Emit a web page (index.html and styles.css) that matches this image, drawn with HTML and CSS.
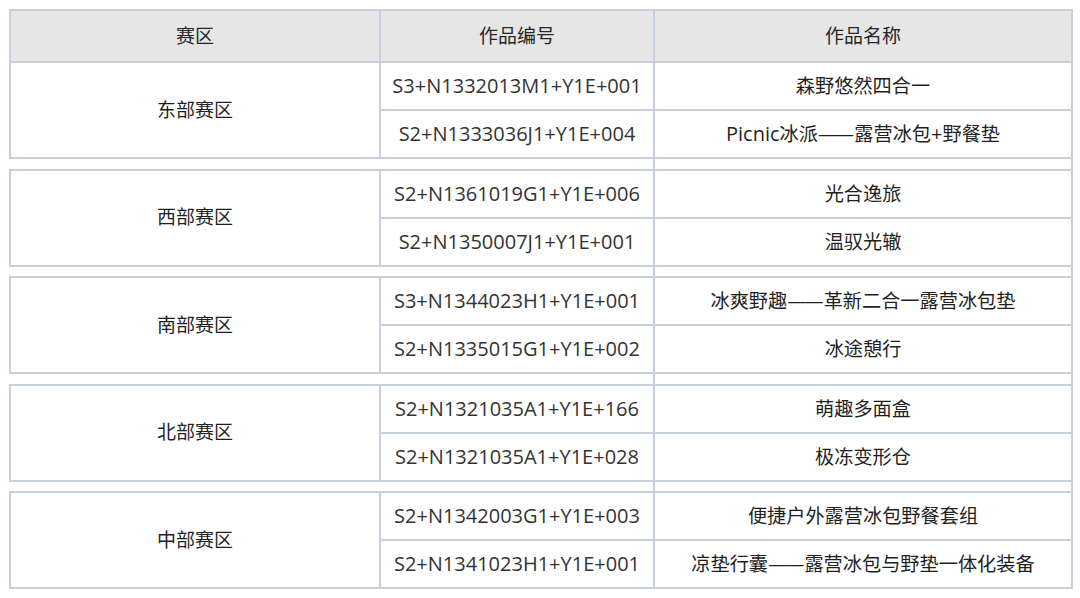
FILE: index.html
```html
<!DOCTYPE html>
<html lang="zh-CN">
<head>
<meta charset="utf-8">
<title>作品列表</title>
<link rel="stylesheet" href="styles.css">
</head>
<body>
<table class="works">
  <colgroup>
    <col class="c-region">
    <col class="c-code">
    <col class="c-name">
  </colgroup>
  <thead>
    <tr class="head-row">
      <th>赛区</th>
      <th>作品编号</th>
      <th>作品名称</th>
    </tr>
  </thead>
  <tbody>
    <tr class="data-row">
      <td class="region" rowspan="2">东部赛区</td>
      <td class="code">S3+N1332013M1+Y1E+001</td>
      <td class="name">森野悠然四合一</td>
    </tr>
    <tr class="data-row">
      <td class="code">S2+N1333036J1+Y1E+004</td>
      <td class="name"><span class="latin">Picnic</span>冰派<span class="dash">——</span>露营冰包<span class="latin">+</span>野餐垫</td>
    </tr>
    <tr class="gap-row"><td class="gap-l" colspan="2"></td><td class="gap-r"></td></tr>

    <tr class="data-row">
      <td class="region" rowspan="2">西部赛区</td>
      <td class="code">S2+N1361019G1+Y1E+006</td>
      <td class="name">光合逸旅</td>
    </tr>
    <tr class="data-row">
      <td class="code">S2+N1350007J1+Y1E+001</td>
      <td class="name">温驭光辙</td>
    </tr>
    <tr class="gap-row"><td class="gap-l" colspan="2"></td><td class="gap-r"></td></tr>

    <tr class="data-row">
      <td class="region" rowspan="2">南部赛区</td>
      <td class="code">S3+N1344023H1+Y1E+001</td>
      <td class="name">冰爽野趣<span class="dash">——</span>革新二合一露营冰包垫</td>
    </tr>
    <tr class="data-row">
      <td class="code">S2+N1335015G1+Y1E+002</td>
      <td class="name">冰途憩行</td>
    </tr>
    <tr class="gap-row"><td class="gap-l" colspan="2"></td><td class="gap-r"></td></tr>

    <tr class="data-row">
      <td class="region" rowspan="2">北部赛区</td>
      <td class="code">S2+N1321035A1+Y1E+166</td>
      <td class="name">萌趣多面盒</td>
    </tr>
    <tr class="data-row">
      <td class="code">S2+N1321035A1+Y1E+028</td>
      <td class="name">极冻变形仓</td>
    </tr>
    <tr class="gap-row"><td class="gap-l" colspan="2"></td><td class="gap-r"></td></tr>

    <tr class="data-row">
      <td class="region" rowspan="2">中部赛区</td>
      <td class="code">S2+N1342003G1+Y1E+003</td>
      <td class="name">便捷户外露营冰包野餐套组</td>
    </tr>
    <tr class="data-row">
      <td class="code">S2+N1341023H1+Y1E+001</td>
      <td class="name">凉垫行囊<span class="dash">——</span>露营冰包与野垫一体化装备</td>
    </tr>
  </tbody>
</table>
</body>
</html>
```

FILE: styles.css
```css
html, body {
  margin: 0;
  padding: 0;
  background: #ffffff;
}

body {
  padding: 9px 0 0 9px;
  font-family: "Open Sans", "Noto Sans CJK SC", sans-serif;
  font-size: 19px;
  color: #262626;
}

.works {
  border-collapse: collapse;
  table-layout: fixed;
  width: 1062px;
}

.c-region { width: 370px; }
.c-code { width: 274px; }
.c-name { width: 418px; }

.works th,
.works td {
  border: 2px solid #c6d0dc;
  padding: 0;
  text-align: center;
  vertical-align: middle;
  line-height: 1;
}

.works th {
  background: #e6e6e6;
  font-weight: normal;
  color: #262626;
}

.head-row { height: 52px; }
.data-row { height: 48px; }
.gap-row { height: 11.5px; }

.code {
  font-size: 20px;
  color: #333333;
}

.name {
  font-size: 19.2px;
  color: #1f1f1f;
}

.latin {
  font-size: 20px;
}

.dash {
  font-family: "DejaVu Sans", "Noto Sans CJK SC", sans-serif;
  letter-spacing: -2px;
  margin-right: 2px;
}

.region {
  color: #1f1f1f;
}

.gap-l {
  border-left: hidden !important;
}
```
